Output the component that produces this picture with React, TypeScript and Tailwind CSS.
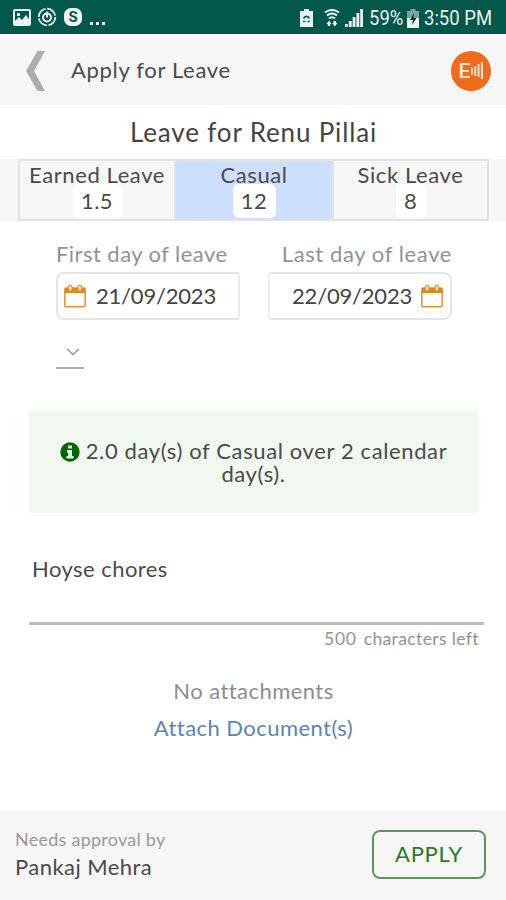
import { ChevronDown } from 'lucide-react';

const leaveTypes = [
  { id: 'earned', name: 'Earned Leave', balance: '1.5', width: 'w-[156px]', pill: 'w-[49px]', active: false },
  { id: 'casual', name: 'Casual', balance: '12', width: 'w-[158px]', pill: 'w-[43px]', active: true },
  { id: 'sick', name: 'Sick Leave', balance: '8', width: 'w-[157px]', pill: 'w-[30px]', active: false },
];

const CalendarIcon = () => (
  <svg width="22" height="24" viewBox="0 0 22 24" fill="none" className="shrink-0">
    <rect x="0.8" y="4" width="20.4" height="18.7" rx="1.2" stroke="#dc962e" strokeWidth="1.5" />
    <path d="M1 4h20v5H1z" fill="#d98a1c" />
    <rect x="4.4" y="1" width="3.600" height="6" rx="1.800" fill="#f6dfba" stroke="#dc962e" strokeWidth="1.2" />
    <rect x="14" y="1" width="3.600" height="6" rx="1.800" fill="#f6dfba" stroke="#dc962e" strokeWidth="1.2" />
  </svg>
);

const StatusBar = () => (
  <div className="h-[34px] shrink-0 bg-[#00574a] flex items-center justify-between text-[#e9f3f0] tracking-normal">
    <div className="flex items-center pl-[13px]">
      <svg width="18" height="17" viewBox="0 0 18 17">
        <path fillRule="evenodd" fill="currentColor" d="M2 0h14a2 2 0 0 1 2 2v13a2 2 0 0 1-2 2H2a2 2 0 0 1-2-2V2a2 2 0 0 1 2-2zm0 2v10l4-4 3 3 4-5 3 4V2zM4 4h3v3H4z" />
      </svg>
      <svg width="20" height="20" viewBox="0 0 20 20" fill="none" stroke="currentColor" className="ml-[6px]">
        <circle cx="10" cy="10" r="8.3" strokeWidth="1.8" strokeDasharray="11.4 1.6" />
        <circle cx="10" cy="10.5" r="4" strokeWidth="2" />
        <path d="M10 4.500v6" strokeWidth="2" />
      </svg>
      <div className="ml-[7px] size-[18px] rounded-[7px] bg-[#f0f7f5] text-[#00574a] font-bold text-[15px] leading-[18px] text-center font-[Roboto,sans-serif]">S</div>
      <div className="ml-[8px] mt-[12px] flex gap-[3px]">
        <i className="size-[3px] bg-current" />
        <i className="size-[3px] bg-current" />
        <i className="size-[3px] bg-current" />
      </div>
    </div>

    <div className="flex items-center pt-[2px] font-[Roboto,sans-serif] text-[21px] leading-[24px]">
      <svg width="13" height="18" viewBox="0 0 13 18" className="mr-[11px]">
        <path fill="currentColor" d="M4 0h5v2h4v16H0V2h4z" />
        <path fill="none" stroke="#00574a" strokeWidth="1.6" d="M3.500 9.500a3.200 3.200 0 0 1 6 0M3.200 12.500h2.200M7.600 12.500h2.200" />
      </svg>
      <svg width="16" height="18" viewBox="0 0 16 18" fill="none" stroke="currentColor" className="mr-[5px]">
        <path d="M1 3.500q7-5 14 0M3 6.500q5-4 10 0M5 9.500q3-2.600 6 0" strokeWidth="2" />
        <path fill="currentColor" stroke="none" d="M2.500 15 5 11.500l2.500 3.500H6.200v2h-2.400v-2zM8.200 14h1.300v-2h2.600v2h1.300L10.800 17.500z" />
      </svg>
      <svg width="18" height="18" viewBox="0 0 18 18" fill="currentColor" className="mr-[6px]">
        <path d="M0 15h2.800v3H0zM3.800 12h2.900v6H3.800zM7.600 8h2.900v10H7.600zM11.400 4h2.900v14h-2.900zM15.200 0H18v18h-2.800z" />
      </svg>
      <div className="w-[36px] whitespace-nowrap"><span className="inline-block origin-left scale-x-[0.88]">59%</span></div>
      <svg width="12" height="19" viewBox="0 0 12 19" className="ml-[2px]">
        <path fill="#7fa39c" d="M3.500 0h5v2H12v8H0V2h3.500z" />
        <path fill="currentColor" d="M0 9h12v10H0z" />
        <path fill="#0b2f29" d="M7 4 3 11h3l-1 5 4.500-7H6.500z" />
      </svg>
      <div className="ml-[5px] w-[82px] whitespace-nowrap"><span className="inline-block origin-left scale-x-[0.88]">3:50 PM</span></div>
    </div>
  </div>
);

const App = () => {
  return (
    <div className="w-[506px] h-[900px] flex flex-col overflow-hidden bg-white text-[#4a4a4a] font-[Lato,sans-serif] text-[22px] leading-[24px] tracking-[0.45px]">
      <StatusBar />

      <header className="mt-[2px] h-[69px] shrink-0 bg-[#f6f6f6] flex items-center pl-[25px] pr-[15px]">
        <svg width="21" height="40" viewBox="0 0 21 40">
          <path d="M12.500 0H20L9 20l11 20h-7.500L1 20z" fill="#acacac" />
        </svg>
        <h1 className="ml-[25px] pb-[2px] tracking-[0.68px]">Apply for Leave</h1>
        <div className="ml-auto size-10 rounded-full bg-[#ee6c1b] text-[#fbe5d5] flex items-center justify-center gap-px tracking-normal">
          <span className="font-[Roboto,sans-serif] text-[21px] font-medium">E</span>
          <svg width="12" height="17" viewBox="0 0 12 17" fill="currentColor">
            <path d="M0 5.500h1.900v7H0zM3.300 4h1.900v10H3.300zM6.600 2h1.900v13H6.600zM9.900 0H12v17H9.900z" />
          </svg>
        </div>
      </header>

      <h2 className="h-[54px] shrink-0 pb-px pl-px flex items-center justify-center text-[26px] tracking-[0.85px] text-[#444]">Leave for Renu Pillai</h2>

      <div className="h-[62px] shrink-0 bg-[#f6f6f6] pl-[18px] flex">
        {leaveTypes.map((type) => (
          <div
            key={type.id}
            className={`${type.width} border-y-2 border-l-2 last:border-r-2 border-[#e2e2e2] flex flex-col items-center ${type.active ? 'bg-[#cce0fd]' : 'bg-[#f6f6f6]'}`}
          >
            <span className="mt-[2px] h-[21px] whitespace-nowrap tracking-[0.6px]">{type.name}</span>
            <span className={`${type.pill} h-[34px] rounded-[6px] bg-white text-center leading-[34px]`}>{type.balance}</span>
          </div>
        ))}
      </div>

      <div className="mt-[21px] pl-[56px] pr-[54px] flex justify-between">
        <div className="w-[184px]">
          <div className="text-[#929292]">First day of leave</div>
          <div className="mt-[6px] h-[48px] rounded-l-lg rounded-r-[3px] border-2 border-[#e5e5e5] border-r-[#ececec] flex items-center pl-[6px] pb-px text-[#444] tracking-[-0.2px]">
            <CalendarIcon />
            <span className="ml-[10px]">21/09/2023</span>
          </div>
        </div>
        <div className="w-[184px]">
          <div className="text-[#929292] text-right tracking-[0.6px]">Last day of leave</div>
          <div className="mt-[6px] h-[48px] rounded-r-lg rounded-l-[3px] border-2 border-[#e5e5e5] border-l-[#ececec] flex items-center justify-end pr-[7px] pb-px text-[#444] tracking-[-0.2px]">
            <span className="mr-[9px]">22/09/2023</span>
            <CalendarIcon />
          </div>
        </div>
      </div>

      <div className="ml-[56px] mt-[21px] w-[28px] h-[28px] border-b-2 border-[#adadad] flex justify-center pl-[6px]">
        <ChevronDown className="size-[22px] text-[#999]" strokeWidth={1.7} />
      </div>

      <div className="mt-[42px] ml-[29px] w-[449px] h-[102px] shrink-0 bg-[#f0f8f0]">
        <p className="px-[28px] pt-[28px] text-center leading-[23px] tracking-[0.62px]">
          <svg width="20" height="20" viewBox="0 0 20 20" className="inline-block align-[-3px] mr-[6px]">
            <circle cx="10" cy="10" r="9.700" fill="#006400" />
            <path fill="#e8f3e8" d="M8 3.500h4v3H8zM7 8h5v6h1.500v2.500h-7V14H8v-3.500H7z" />
          </svg>
          2.0 day(s) of Casual over 2 calendar day(s).
        </p>
      </div>

      <div className="mt-[44px] ml-[29px] w-[455px] h-[68px] shrink-0 border-b-[3px] border-[#bcbcbc] pl-[3px]">Hoyse chores</div>
      <div className="h-[26px] pr-[27px] flex justify-end gap-[7px] text-[17.5px] leading-[27px] tracking-[0.38px] text-[#929292]">
        <span className="tracking-[0.7px]">500</span>
        <span>characters left</span>
      </div>

      <div className="mt-[28px] pl-px text-center text-[#8d8d8d]">No attachments</div>
      <div className="mt-[13px] pl-px text-center text-[#5f82b5]">Attach Document(s)</div>

      <footer className="mt-auto h-[90px] shrink-0 bg-[#f6f6f6] pl-[15px] pr-[20px] flex items-center justify-between">
        <div className="pb-[4px]">
          <div className="text-[18px] tracking-[0.25px] text-[#9a9a9a]">Needs approval by</div>
          <div className="mt-[4px]">Pankaj Mehra</div>
        </div>
        <button className="mb-px w-[114px] h-[49px] rounded-lg border-2 border-[#5c985c] text-[#277a27] tracking-[0.7px] pb-px">APPLY</button>
      </footer>
    </div>
  );
};

export default App;
